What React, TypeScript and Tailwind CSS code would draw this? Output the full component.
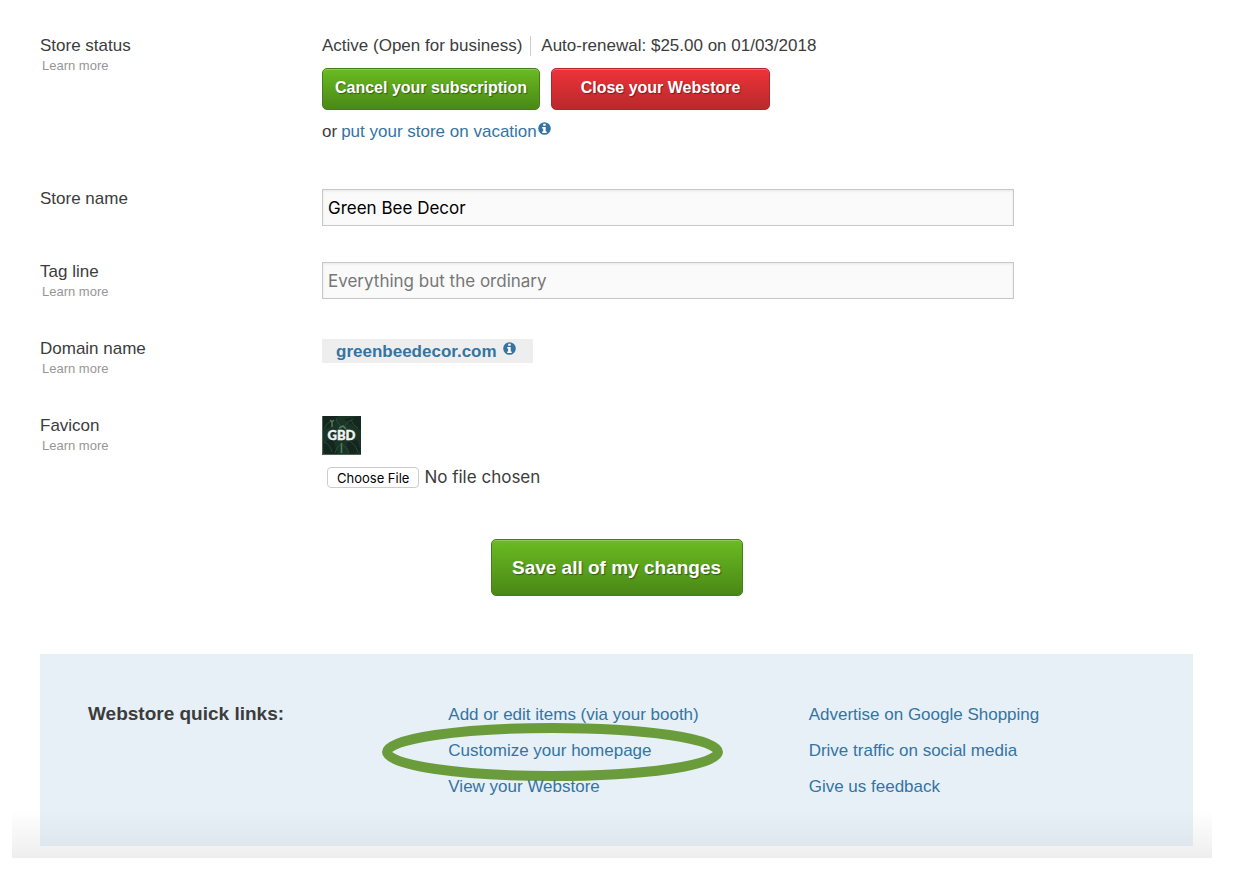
import type { ReactNode } from "react";

const links = [
    ["Add or edit items (via your booth)", "Customize your homepage", "View your Webstore"],
    ["Advertise on Google Shopping", "Drive traffic on social media", "Give us feedback"],
];

function InfoIcon() {
    return (
        <svg width="13" height="13" viewBox="0 0 13 13" role="img" aria-label="More info">
            <circle cx="6.5" cy="6.5" r="6.3" fill="#3474a3" />
            <path d="M5.2 1.8h2.500v2H5.200zM4.200 4.900h3.500v4.500h1v1.500H4.200V9.400h1V6.400h-1z" fill="#fff" />
        </svg>
    );
}

/* Green bee decor favicon: dark foliage with the shop initials */
function Favicon() {
    return (
        <svg width="39" height="39" viewBox="0 0 39 39" role="img" aria-label="Current favicon">
            <rect width="39" height="39" fill="#1b3428" />
            <path d="M0 0h16l-5 9-11 6zM22 3l17-3v14l-9-5zM0 27l11-4 5 16H3zM24 27l11-3 4 11-11 4z" fill="#14271f" />
            <g fill="none" stroke="#294b36" strokeWidth="1">
                <path d="M2 13q3-7 8-8M14 2q1 5 5 8M22 11q3-6 9-8M29 4q2 6 7 8M2 26q6 2 8 10M13 37q1-6 6-9M21 29q4 2 6 8M29 26q5 3 7 10" />
            </g>
            <path d="M8 4l2 2 2-2M10 5v6M17 12l4-2 3 3M19.5 27v10" fill="none" stroke="#587a58" strokeWidth="1.5" />
            <path d="M.5 0v38.500H39" fill="none" stroke="#4d6557" />
            <text x="19.500" y="24" textAnchor="middle" fill="#f1f3f1" stroke="#f1f3f1" strokeWidth="0.4" fontSize="13" fontWeight="900" fontFamily="Lato, sans-serif">
                GBD
            </text>
        </svg>
    );
}

type RowProps = {
    label: string;
    htmlFor?: string;
    learnMore?: boolean;
    className?: string;
    children: ReactNode;
};

function Row({ label, htmlFor, learnMore = false, className = "", children }: RowProps) {
    return (
        <div className={`flex ${className}`}>
            <div className="w-[282px] shrink-0">
                {htmlFor ? (
                    <label htmlFor={htmlFor} className="block">{label}</label>
                ) : (
                    <div>{label}</div>
                )}
                {learnMore && (
                    <a href="#" className="ml-0.5 block w-fit text-[13px] leading-5 text-[#969696]">Learn more</a>
                )}
            </div>
            <div className="w-3/5">{children}</div>
        </div>
    );
}

const buttonBase =
    "rounded-[5px] border text-center font-bold text-white [text-shadow:1px_1px_1px_rgba(0,0,0,0.4)]";
const green =
    "border-[#43801a] bg-linear-to-b from-[#6abb22] to-[#4a8816] shadow-[inset_0_1px_0_#8ccb55]";
const red =
    "border-[#b3242b] bg-linear-to-b from-[#ee3338] to-[#b9292d] shadow-[inset_0_1px_0_#f4696c]";
const inputBase =
    "block h-[37px] w-full border border-[#c8c8c8] bg-[#fafafa] px-[5px] font-[Inter,sans-serif] text-[17px] text-black shadow-[inset_0_1px_3px_rgba(0,0,0,0.08)] placeholder:text-[#777]";

export default function App() {
    return (
        <main className="mr-7 ml-3 bg-white bg-linear-to-t from-[#eeeeee] to-transparent bg-[length:100%_48px] bg-bottom bg-no-repeat pt-9 pr-[19px] pb-3 pl-7 font-['Liberation_Sans',Arial,sans-serif] text-[17px] leading-5 text-[#3c3c3c]">
            <form onSubmit={(e) => e.preventDefault()}>
                <Row label="Store status" learnMore>
                    <div className="flex items-center">
                        <span className="mr-2.5 border-r border-[#ccc] pr-2">Active (Open for business)</span>
                        <span>Auto-renewal: $25.00 on 01/03/2018</span>
                    </div>
                    <div className="mt-3 flex gap-[11px]">
                        <button type="button" className={`${buttonBase} ${green} h-[42px] w-[218px] pb-0.5 text-base`}>
                            Cancel your subscription
                        </button>
                        <button type="button" className={`${buttonBase} ${red} h-[42px] w-[219px] pb-0.5 text-base`}>
                            Close your Webstore
                        </button>
                    </div>
                    <div className="mt-3 flex">
                        <span className="mr-1">or</span>
                        <a href="#" className="flex gap-px text-[#3474a3]">
                            put your store on vacation
                            <InfoIcon />
                        </a>
                    </div>
                </Row>

                <Row label="Store name" htmlFor="store-name" className="mt-[47px]">
                    <input id="store-name" type="text" defaultValue="Green Bee Decor" className={inputBase} />
                </Row>

                <Row label="Tag line" htmlFor="tag-line" learnMore className="mt-9">
                    <input id="tag-line" type="text" placeholder="Everything but the ordinary" className={inputBase} />
                </Row>

                <Row label="Domain name" learnMore className="mt-[37px]">
                    <a href="#" className="flex h-6 w-fit gap-1.5 bg-[#eee] pt-[3px] pr-[17px] pl-3.5 font-bold text-[#3474a3]">
                        greenbeedecor.com
                        <InfoIcon />
                    </a>
                </Row>

                <Row label="Favicon" htmlFor="favicon" learnMore className="mt-[37px]">
                    <Favicon />
                    <input
                        id="favicon"
                        type="file"
                        className="mt-3 ml-[5px] block font-[Inter,sans-serif] text-[17px] leading-5 file:mr-[5px] file:h-[21px] file:rounded-[4px] file:border file:border-solid file:border-[#ccc] file:bg-white file:px-[9px] file:text-[13px] file:text-black"
                    />
                </Row>

                <button type="submit" className={`${buttonBase} ${green} mx-auto mt-[51px] block h-[57px] w-[252px] text-[19px]`}>
                    Save all of my changes
                </button>
            </form>

            <section className="mt-[58px] grid grid-cols-3 bg-[#bbd3e5]/35 pt-[50px] pr-6 pb-[49px] pl-12">
                <h2 className="text-[19px] leading-5 font-bold">Webstore quick links:</h2>
                {links.map((column) => (
                    <ul key={column[0]} className="space-y-4 pt-px text-[#3474a3]">
                        {column.map((text) => (
                            <li key={text} className="relative">
                                <a href="#">{text}</a>
                                {text === "Customize your homepage" && (
                                    <svg className="pointer-events-none absolute -top-[18px] -left-[66px]" width="341" height="58" viewBox="0 0 341 58" fill="none" aria-hidden="true">
                                        <ellipse cx="170.500" cy="29" rx="165.500" ry="24" stroke="#6a9c3c" strokeWidth="10" />
                                    </svg>
                                )}
                            </li>
                        ))}
                    </ul>
                ))}
            </section>
        </main>
    );
}
